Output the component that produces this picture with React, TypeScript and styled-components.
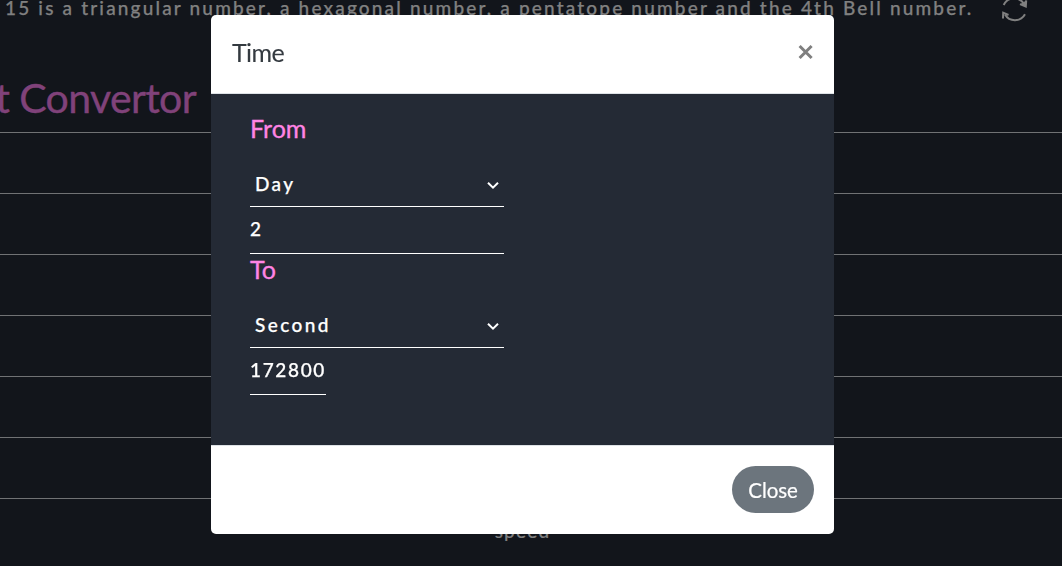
import React from 'react';
import styled, { createGlobalStyle } from 'styled-components';

const GlobalStyle = createGlobalStyle`
  * { box-sizing: border-box; }
  html, body { margin: 0; height: 100%; overflow: hidden; }
  body { background: #12151b; font-family: Lato, "Liberation Sans", sans-serif; }
  h1, h2, h3, p { margin: 0; font-weight: 400; }
`;

const Page = styled.main`
  height: 566px;
  overflow: hidden;
`;

const FactBar = styled.header`
  display: flex;
  height: 80px;
  padding-left: 5px;
  color: #808080;
`;

const Fact = styled.p`
  width: 996px;
  margin-top: -6px;
  font-size: 19px;
  font-weight: 500;
  line-height: 28px;
  letter-spacing: 2.17px;
  white-space: nowrap;
  -webkit-text-stroke: 0.25px currentColor;
`;

const RefreshIcon = styled.svg`
  flex: none;
  width: 28px;
  height: 28px;
  margin-top: -4px;
`;

const PageTitle = styled.h1`
  height: 52px;
  display: flex;
  width: 196px;
  justify-content: flex-end;
  color: #80427a;
  font-size: 41px;
  line-height: 36px;
  letter-spacing: -0.65px;
  white-space: nowrap;
  -webkit-text-stroke: 0.4px currentColor;
`;

const Category = styled.div`
  height: 61px;
  padding-right: 17px;
  border-top: 1px solid #707274;
  color: #808080;
  font-size: 19px;
  font-weight: 500;
  line-height: 63px;
  letter-spacing: 1.2px;
  text-align: center;
  -webkit-text-stroke: 0.15px currentColor;
`;

const Overlay = styled.div`
  position: fixed;
  inset: 0;
  display: flex;
  align-items: flex-start;
  justify-content: center;
  padding: 15px 17px 0 0;
`;

const Dialog = styled.section`
  width: 623px;
  height: 519px;
  display: flex;
  flex-direction: column;
  overflow: hidden;
  border-radius: 5px;
  background: #fff;
`;

const DialogHeader = styled.header`
  display: flex;
  justify-content: space-between;
  height: 79px;
  padding: 20px 20px 0 21px;
  border-bottom: 1px solid #dee2e6;
`;

const DialogTitle = styled.h2`
  color: #343a40;
  font-size: 25px;
  line-height: 35px;
  letter-spacing: -0.6px;
  -webkit-text-stroke: 0.1px currentColor;
`;

const Dismiss = styled.button`
  display: flex;
  width: 17px;
  height: 34px;
  align-items: center;
  justify-content: center;
  padding: 0;
  border: 0;
  background: none;
`;

const DialogBody = styled.div`
  height: 351px;
  padding: 18px 39px 0;
  background: #242a35;
  color: #fff;
`;

const Group = styled.div<{ $height: number }>`
  width: 254px;
  height: ${p => p.$height}px;
`;

const GroupTitle = styled.h3`
  height: 50px;
  color: #ff84e4;
  font-size: 25px;
  line-height: 33px;
  -webkit-text-stroke: 0.35px currentColor;
`;

const UnitSelect = styled.div`
  display: flex;
  justify-content: space-between;
  height: 45px;
  padding: 0 4px 0 5px;
  border-bottom: 1px solid #fff;
  font-size: 19px;
  font-weight: 500;
  line-height: 43px;
  letter-spacing: 2.4px;
  -webkit-text-stroke: 0.25px currentColor;

  svg { margin-top: 16px; }
`;

const Value = styled.div<{ $width: number }>`
  width: ${p => p.$width}px;
  height: 47px;
  border-bottom: 1px solid #fff;
  font-size: 19px;
  font-weight: 500;
  line-height: 43px;
  letter-spacing: 1.65px;
  white-space: nowrap;
  -webkit-text-stroke: 0.25px currentColor;
`;

const DialogFooter = styled.footer`
  display: flex;
  justify-content: flex-end;
  height: 89px;
  padding: 20px 20px 0;
  border-top: 1px solid #dee2e6;
`;

const CloseButton = styled.button`
  width: 82px;
  height: 47px;
  padding: 1px 0 0;
  border: 0;
  border-radius: 24px;
  background: #6c757d;
  color: #fff;
  font-family: inherit;
  font-size: 20.5px;
  line-height: 46px;
  letter-spacing: -0.1px;
  -webkit-text-stroke: 0.2px currentColor;
`;

const Chevron = () => (
  <svg width="14" height="14" viewBox="0 0 14 14" fill="none" stroke="#fff" strokeWidth="2">
    <path d="M2 4.7 7 9.7 12 4.7" />
  </svg>
);

const categories = ['', '', '', '', '', '', 'speed'];

export default function App() {
  return (
    <>
      <GlobalStyle />
      <Page>
        <FactBar>
          <Fact>15 is a triangular number, a hexagonal number, a pentatope number and the 4th Bell number.</Fact>
          <RefreshIcon viewBox="0 0 28 28" fill="none" stroke="#808080" strokeWidth="2">
            <path d="M2.7 9A11.5 11.5 0 0 1 23.5 9" />
            <path d="M19 8.2 24.8 10.6 25.2 4.4" fill="#808080" />
            <path d="M24 18.2A11.5 11.5 0 0 1 4 18.5" />
            <path d="M7.5 19 2.2 16.7 2 22.5" />
          </RefreshIcon>
        </FactBar>
        <PageTitle>Unit Convertor</PageTitle>
        {categories.map((name, i) => <Category key={i}>{name}</Category>)}
      </Page>
      <Overlay>
        <Dialog role="dialog" aria-label="Time">
          <DialogHeader>
            <DialogTitle>Time</DialogTitle>
            <Dismiss aria-label="Dismiss">
              <svg width="17" height="16" viewBox="0 0 17 16" stroke="#7f7f7f" strokeWidth="3">
                <path d="M2.6 2 14.6 14M14.6 2 2.6 14" />
              </svg>
            </Dismiss>
          </DialogHeader>
          <DialogBody>
            <Group $height={141}>
              <GroupTitle>From</GroupTitle>
              <UnitSelect>Day<Chevron /></UnitSelect>
              <Value $width={254}>2</Value>
            </Group>
            <Group $height={142}>
              <GroupTitle>To</GroupTitle>
              <UnitSelect>Second<Chevron /></UnitSelect>
              <Value $width={76}>172800</Value>
            </Group>
          </DialogBody>
          <DialogFooter><CloseButton>Close</CloseButton></DialogFooter>
        </Dialog>
      </Overlay>
    </>
  );
}
